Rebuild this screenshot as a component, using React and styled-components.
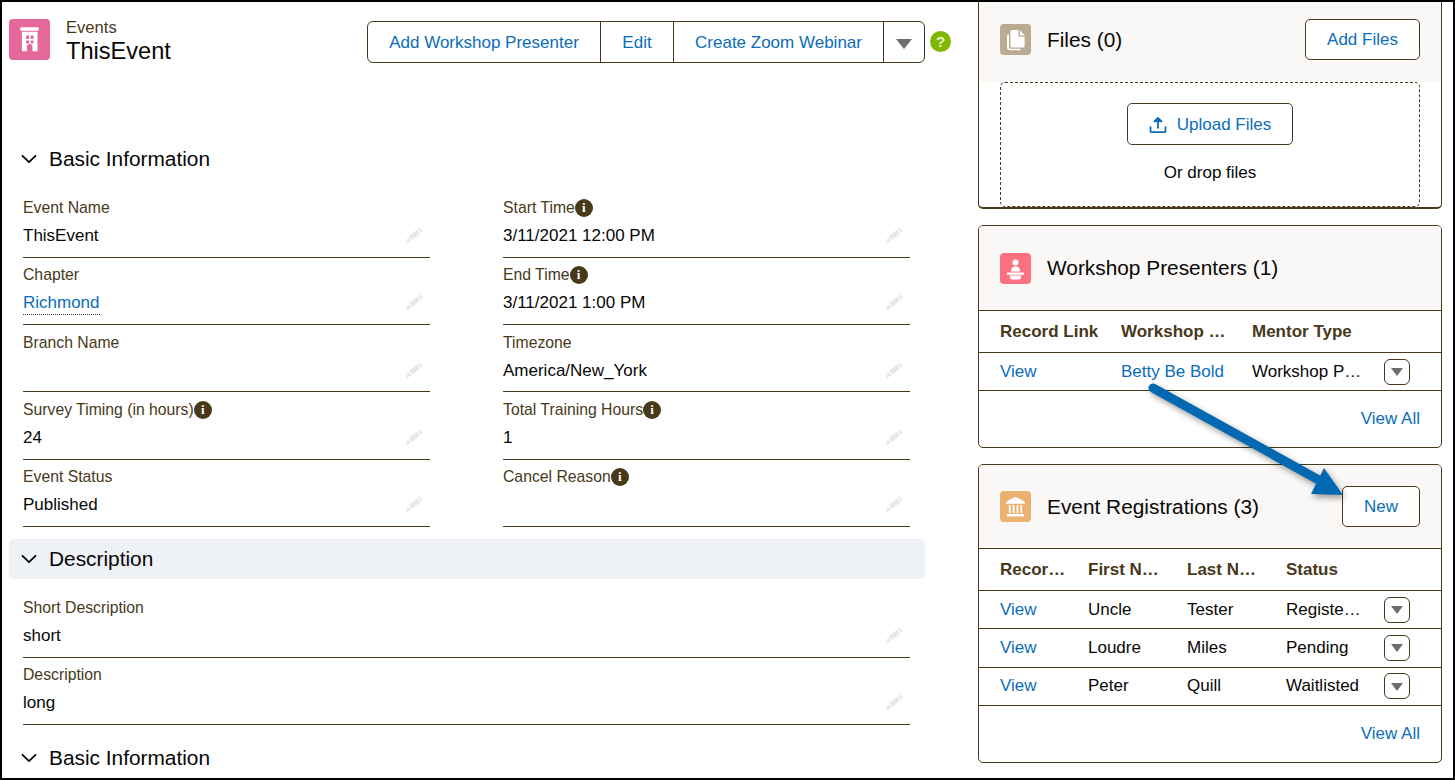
import React from "react";
import styled, { createGlobalStyle } from "styled-components";

const INK = "#47391a";
const LINK = "#0b6dbb";

const GlobalStyle = createGlobalStyle`
  html, body {
    margin: 0;
    padding: 0;
    background: #fff;
  }
  body {
    font-family: "Liberation Sans", Arial, sans-serif;
    color: #080707;
  }
`;

const Frame = styled.div`
  position: relative;
  box-sizing: border-box;
  width: 1455px;
  height: 780px;
  border: 2px solid #000;
  overflow: hidden;
  display: flex;
  background: #fff;
`;

const LeftColumn = styled.div`
  width: 976px;
  flex: none;
  padding-left: 7px;
  box-sizing: border-box;
`;

const RightColumn = styled.div`
  width: 464px;
  flex: none;
  display: flex;
  flex-direction: column;
  gap: 16px;
`;

const PageHeader = styled.div`
  display: flex;
  align-items: flex-start;
  height: 137px;
  width: 942px;
  padding-top: 17px;
  box-sizing: border-box;
`;

const IconBox = styled.div`
  flex: none;
  width: ${(p) => p.size || 31}px;
  height: ${(p) => p.size || 31}px;
  border-radius: 4px;
  background: ${(p) => p.color};
  svg {
    display: block;
    width: 100%;
    height: 100%;
  }
`;

const TitleBlock = styled.div`
  margin-left: 16px;
  margin-top: -1px;
`;

const Crumb = styled.div`
  font-size: 16.6px;
  line-height: 20px;
  color: ${INK};
`;

const RecordName = styled.div`
  font-size: 23.6px;
  line-height: 27px;
  color: #080707;
`;

const ActionGroup = styled.div`
  display: flex;
  margin-left: auto;
  margin-top: 2px;
  height: 42px;
  box-sizing: border-box;
  border: 1px solid ${INK};
  border-radius: 6px;
`;

const ActionButton = styled.div`
  width: ${(p) => p.width}px;
  box-sizing: border-box;
  display: flex;
  align-items: center;
  justify-content: center;
  padding-top: 1px;
  color: ${LINK};
  font-size: 17px;
  & + & {
    border-left: 1px solid ${INK};
  }
`;

const Caret = styled.span`
  display: block;
  flex: none;
  width: 0;
  height: 0;
  margin-top: ${(p) => (p.large ? 3 : 1)}px;
  border-left: ${(p) => (p.large ? 8 : 6.5)}px solid transparent;
  border-right: ${(p) => (p.large ? 8 : 6.5)}px solid transparent;
  border-top: ${(p) => (p.large ? 10 : 8)}px solid #706e6b;
`;

const HelpDot = styled.div`
  flex: none;
  width: 21px;
  height: 21px;
  margin: 12px 0 0 5px;
  border-radius: 50%;
  background: #7fb800;
  color: #e9f3c8;
  font-size: 15px;
  font-weight: 700;
  line-height: 21px;
  text-align: center;
`;

const SectionHeader = styled.div`
  width: 916px;
  height: 40px;
  display: flex;
  align-items: center;
  gap: 12px;
  padding-left: 12px;
  box-sizing: border-box;
  border-radius: 5px;
  font-size: 20.85px;
  background: ${(p) => (p.shaded ? "#eef1f6" : "transparent")};
  margin-top: ${(p) => p.gap || 0}px;
  svg {
    width: 16px;
    height: 16px;
    flex: none;
  }
`;

const FieldGrid = styled.div`
  display: grid;
  grid-template-columns: ${(p) => (p.wide ? "887px" : "407px 407px")};
  column-gap: 73px;
  grid-auto-rows: 67.2px;
  margin: 11.8px 0 0 14px;
`;

const Field = styled.div`
  box-sizing: border-box;
  padding-top: 7.5px;
  border-bottom: 1px solid ${INK};
`;

const LabelRow = styled.div`
  display: flex;
  align-items: center;
  height: 20px;
  font-size: 15.75px;
  color: ${INK};
`;

const InfoDot = styled.span`
  flex: none;
  width: 18px;
  height: 18px;
  border-radius: 50%;
  background: ${INK};
  color: #fff;
  font-size: 13px;
  font-weight: 700;
  line-height: 18px;
  text-align: center;
  font-family: "Liberation Serif", serif;
`;

const ValueRow = styled.div`
  display: flex;
  justify-content: space-between;
  margin-top: 6px;
  padding-right: 7px;
  height: 24px;
  font-size: 17px;
  line-height: 24px;
`;

const ValueLink = styled.span`
  color: ${LINK};
  border-bottom: 1px dotted ${INK};
  height: 23px;
`;

const Pencil = styled.svg`
  width: 18px;
  height: 18px;
  margin-top: 3px;
  flex: none;
`;

const Card = styled.div`
  box-sizing: border-box;
  height: ${(p) => p.height}px;
  border: 1px solid ${INK};
  border-radius: 5px;
  overflow: hidden;
`;

const FilesCard = styled(Card)`
  border-top: none;
  border-bottom-width: 2px;
  border-radius: 0 0 5px 5px;
`;

const CardHeader = styled.div`
  display: flex;
  align-items: center;
  box-sizing: border-box;
  height: ${(p) => p.height}px;
  padding: 0 21px 0 21px;
  background: #f9f8f6;
`;

const FilesHeader = styled(CardHeader)`
  padding-bottom: 5px;
`;

const RuledHeader = styled(CardHeader)`
  border-bottom: 1px solid ${INK};
`;

const CardTitle = styled.div`
  margin-left: 16px;
  font-size: 20.85px;
  color: #080707;
`;

const OutlineButton = styled.div`
  box-sizing: border-box;
  display: flex;
  align-items: center;
  justify-content: center;
  gap: 10px;
  width: ${(p) => p.width}px;
  height: ${(p) => p.height || 41}px;
  margin-left: ${(p) => (p.push ? "auto" : "0")};
  border: 1px solid ${INK};
  border-radius: 5px;
  background: #fff;
  color: ${LINK};
  font-size: 17px;
  flex: none;
`;

const UploadButton = styled(OutlineButton)`
  padding-top: 1px;
`;

const DropZone = styled.div`
  box-sizing: border-box;
  display: flex;
  flex-direction: column;
  align-items: center;
  height: 125px;
  margin: 0 21px;
  padding-top: 20px;
  border: 1px dashed ${INK};
  border-radius: 5px;
`;

const DropHint = styled.div`
  margin-top: 18px;
  font-size: 17px;
  line-height: 20px;
`;

const TableRow = styled.div`
  display: grid;
  grid-template-columns: ${(p) => p.columns};
  align-items: center;
  box-sizing: border-box;
  height: ${(p) => p.height}px;
  padding-left: 21px;
  border-bottom: 1px solid ${INK};
  font-size: 17px;
`;

const Cell = styled.div`
  min-width: 0;
  padding-right: 22px;
  white-space: nowrap;
  overflow: hidden;
  text-overflow: ellipsis;
  color: ${(p) => (p.link ? LINK : "#080707")};
`;

const HeadCell = styled(Cell)`
  font-weight: 700;
  color: ${INK};
`;

const RowMenu = styled.div`
  box-sizing: border-box;
  width: 26px;
  height: 26px;
  display: flex;
  align-items: center;
  justify-content: center;
  border: 1px solid ${INK};
  border-radius: 6px;
`;

const CardFooter = styled.div`
  display: flex;
  justify-content: flex-end;
  align-items: center;
  height: 55px;
  padding-right: 21px;
  color: ${LINK};
  font-size: 17px;
`;

const ArrowOverlay = styled.svg`
  position: absolute;
  left: -2px;
  top: -2px;
  width: 1455px;
  height: 780px;
  pointer-events: none;
  filter: drop-shadow(2px 3px 3px rgba(0, 0, 0, 0.4));
`;

const Chevron = () => (
  <svg viewBox="0 0 16 16" fill="none" stroke="#080707" strokeWidth="1.8" strokeLinecap="round" strokeLinejoin="round">
    <path d="M1.5 4.8 8 11.2 14.5 4.8" />
  </svg>
);

const PencilIcon = () => (
  <Pencil viewBox="0 0 18 18" fill="#e8e8e8">
    <path d="M14.6 0.4 17.8 4.2 16 5.6 12.8 1.8Z" />
    <path d="M12 2.6 15.2 6.4 7 13 3.8 9.2Z" />
    <path d="M3 10.2 6 13.8 0.4 16.4Z" />
  </Pencil>
);

const BuildingIcon = () => (
  <svg viewBox="0 0 41 42" fill="#fff">
    <rect x="11" y="8.5" width="19" height="3.5" rx="1" />
    <path
      fillRule="evenodd"
      d="M12.7 13H28.7V33H23.5V28.5A2.8 2.8 0 0 0 17.9 28.5V33H12.7ZM17 17V20.5H20V17ZM21.6 17V20.5H24.6V17ZM17 22V25H20V22ZM21.6 22V25H24.6V22Z"
    />
  </svg>
);

const FilesIcon = () => (
  <svg viewBox="0 0 31 31" fill="#fff">
    <path d="M9 10.5V23.2A1.6 1.6 0 0 0 10.6 24.8H20.5V26.2H9.4A2.6 2.6 0 0 1 7 23.6V12A1.6 1.6 0 0 1 8.6 10.5Z" />
    <path d="M12 6H18.4V11.2A1.6 1.6 0 0 0 20 12.8H24.6V22A1.6 1.6 0 0 1 23 23.6H12A1.6 1.6 0 0 1 10.4 22V7.6A1.6 1.6 0 0 1 12 6Z" />
    <path d="M19.8 6 24.6 11.4H20.6A.8.8 0 0 1 19.8 10.6Z" />
  </svg>
);

const PresenterIcon = () => (
  <svg viewBox="0 0 31 31" fill="#fff">
    <circle cx="15.5" cy="9.6" r="3" />
    <path d="M11 18.6C11 15 12.5 13.6 15.5 13.6S20 15 20 18.6Z" />
    <rect x="7" y="19.6" width="17" height="2.2" rx=".6" />
    <path d="M9.6 22.4H21.4L20.2 26.6H10.8Z" />
  </svg>
);

const BankIcon = () => (
  <svg viewBox="0 0 31 31" fill="#fff">
    <path d="M15.5 6C19 7.2 22.4 9 25 11.4V12.8H6V11.4C8.6 9 12 7.2 15.5 6Z" />
    <rect x="8.8" y="14" width="1.8" height="8" />
    <rect x="12.6" y="14" width="1.8" height="8" />
    <rect x="16.6" y="14" width="1.8" height="8" />
    <rect x="20.4" y="14" width="1.8" height="8" />
    <rect x="7" y="23" width="17" height="2.6" rx=".6" />
  </svg>
);

const UploadIcon = () => (
  <svg width="18" height="18" viewBox="0 0 18 18" fill="none" stroke={LINK} strokeWidth="1.8">
    <path d="M1.5 10.5V15.2A1 1 0 0 0 2.5 16.2H15.5A1 1 0 0 0 16.5 15.2V10.5" />
    <path d="M9 12.5V3" />
    <path d="M5 6 9 2 13 6" fill={LINK} strokeLinejoin="round" />
  </svg>
);

const basicFields = [
  { label: "Event Name", value: "ThisEvent" },
  { label: "Start Time", value: "3/11/2021 12:00 PM", info: true },
  { label: "Chapter", value: "Richmond", link: true },
  { label: "End Time", value: "3/11/2021 1:00 PM", info: true },
  { label: "Branch Name", value: "" },
  { label: "Timezone", value: "America/New_York" },
  { label: "Survey Timing (in hours)", value: "24", info: true },
  { label: "Total Training Hours", value: "1", info: true },
  { label: "Event Status", value: "Published" },
  { label: "Cancel Reason", value: "", info: true },
];

const descriptionFields = [
  { label: "Short Description", value: "short" },
  { label: "Description", value: "long" },
];

const registrations = [
  ["Uncle", "Tester", "Registered", 38],
  ["Loudre", "Miles", "Pending", 38.5],
  ["Peter", "Quill", "Waitlisted", 38.5],
];

const PRESENTER_COLS = "121px 131px 132px 26px";
const REGISTRATION_COLS = "88px 99px 99px 98px 26px";

const FieldItem = ({ label, value, info, link }) => (
  <Field>
    <LabelRow>
      {label}
      {info && <InfoDot>i</InfoDot>}
    </LabelRow>
    <ValueRow>
      {link ? <ValueLink>{value}</ValueLink> : <span>{value}</span>}
      <PencilIcon />
    </ValueRow>
  </Field>
);

const Menu = () => (
  <RowMenu>
    <Caret />
  </RowMenu>
);

export default function App() {
  return (
    <>
      <GlobalStyle />
      <Frame>
        <LeftColumn>
          <PageHeader>
            <IconBox size={41} color="#e5689a">
              <BuildingIcon />
            </IconBox>
            <TitleBlock>
              <Crumb>Events</Crumb>
              <RecordName>ThisEvent</RecordName>
            </TitleBlock>
            <ActionGroup>
              <ActionButton width={232}>Add Workshop Presenter</ActionButton>
              <ActionButton width={73}>Edit</ActionButton>
              <ActionButton width={210}>Create Zoom Webinar</ActionButton>
              <ActionButton width={41}>
                <Caret large />
              </ActionButton>
            </ActionGroup>
            <HelpDot>?</HelpDot>
          </PageHeader>

          <SectionHeader>
            <Chevron />
            Basic Information
          </SectionHeader>
          <FieldGrid>
            {basicFields.map((f) => (
              <FieldItem key={f.label} {...f} />
            ))}
          </FieldGrid>

          <SectionHeader shaded gap={12}>
            <Chevron />
            Description
          </SectionHeader>
          <FieldGrid wide>
            {descriptionFields.map((f) => (
              <FieldItem key={f.label} {...f} />
            ))}
          </FieldGrid>

          <SectionHeader gap={13}>
            <Chevron />
            Basic Information
          </SectionHeader>
        </LeftColumn>

        <RightColumn>
          <FilesCard height={207}>
            <FilesHeader height={80}>
              <IconBox color="#baac93">
                <FilesIcon />
              </IconBox>
              <CardTitle>Files (0)</CardTitle>
              <OutlineButton push width={115}>
                Add Files
              </OutlineButton>
            </FilesHeader>
            <DropZone>
              <UploadButton width={166} height={42}>
                <UploadIcon />
                Upload Files
              </UploadButton>
              <DropHint>Or drop files</DropHint>
            </DropZone>
          </FilesCard>

          <Card height={223}>
            <RuledHeader height={85}>
              <IconBox color="#fc7180">
                <PresenterIcon />
              </IconBox>
              <CardTitle>Workshop Presenters (1)</CardTitle>
            </RuledHeader>
            <TableRow columns={PRESENTER_COLS} height={42}>
              <HeadCell>Record Link</HeadCell>
              <HeadCell>Workshop Name</HeadCell>
              <HeadCell>Mentor Type</HeadCell>
            </TableRow>
            <TableRow columns={PRESENTER_COLS} height={38}>
              <Cell link>View</Cell>
              <Cell link>Betty Be Bold</Cell>
              <Cell>Workshop Presenter</Cell>
              <Menu />
            </TableRow>
            <CardFooter>View All</CardFooter>
          </Card>

          <Card height={299}>
            <RuledHeader height={84}>
              <IconBox color="#ebb26f">
                <BankIcon />
              </IconBox>
              <CardTitle>Event Registrations (3)</CardTitle>
              <OutlineButton push width={78}>
                New
              </OutlineButton>
            </RuledHeader>
            <TableRow columns={REGISTRATION_COLS} height={42}>
              <HeadCell>Record Link</HeadCell>
              <HeadCell>First Name</HeadCell>
              <HeadCell>Last Name</HeadCell>
              <HeadCell>Status</HeadCell>
            </TableRow>
            {registrations.map(([first, last, status, height]) => (
              <TableRow key={first} columns={REGISTRATION_COLS} height={height}>
                <Cell link>View</Cell>
                <Cell>{first}</Cell>
                <Cell>{last}</Cell>
                <Cell>{status}</Cell>
                <Menu />
              </TableRow>
            ))}
            <CardFooter>View All</CardFooter>
          </Card>
        </RightColumn>

        <ArrowOverlay viewBox="0 0 1455 780">
          <path d="M1153 388 1326 484" stroke="#0368b2" strokeWidth="9" strokeLinecap="round" fill="none" />
          <path d="M1343 495 1324 468 1311 494Z" fill="#0368b2" />
        </ArrowOverlay>
      </Frame>
    </>
  );
}
